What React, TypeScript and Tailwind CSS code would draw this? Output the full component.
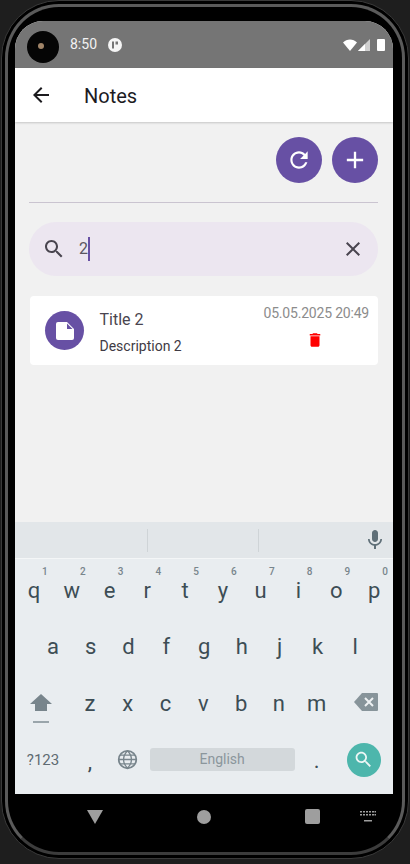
import React from 'react';

const Icon = ({ d, className }: { d: string; className: string }) => (
  <svg viewBox="0 0 24 24" fill="currentColor" className={className}>
    <path d={d} />
  </svg>
);

const row1 = [['q', '1'], ['w', '2'], ['e', '3'], ['r', '4'], ['t', '5'], ['y', '6'], ['u', '7'], ['i', '8'], ['o', '9'], ['p', '0']];
const row2 = ['a', 's', 'd', 'f', 'g', 'h', 'j', 'k', 'l'];
const row3 = ['z', 'x', 'c', 'v', 'b', 'n', 'm'];

function Key({ label, hint }: { label: string; hint?: string }) {
  return (
    <div className="relative w-[37.8px] h-[56.5px] flex items-center justify-center text-[22px] text-[#3d4d55]">
      {label}
      {hint && <span className="absolute top-[2px] right-[5px] text-[10px] font-medium text-[#78858c]">{hint}</span>}
    </div>
  );
}

function Keyboard() {
  return (
    <div className="h-[272px] bg-[#e9edf0] flex flex-col">
      <div className="h-[37px] bg-[#e2e6e9] border-b border-[#f4f6f7] flex items-center">
        <div className="w-[133px] h-[23px] border-r border-[#cfd4d7]" />
        <div className="w-[111px] h-[23px] border-r border-[#cfd4d7]" />
        <Icon
          d="M12 14c1.66 0 3-1.34 3-3V5c0-1.66-1.34-3-3-3S9 3.34 9 5v6c0 1.66 1.34 3 3 3zm5.3-3c0 3-2.54 5.1-5.3 5.1S6.7 14 6.7 11H5c0 3.41 2.72 6.23 6 6.72V21h2v-3.28c3.28-.48 6-3.3 6-6.72h-1.7z"
          className="w-[24px] h-[24px] ml-[104px] text-[#5f6f78]"
        />
      </div>
      <div className="pt-[3px] flex flex-col">
        <div className="flex">
          {row1.map(([l, h]) => <Key key={l} label={l} hint={h} />)}
        </div>
        <div className="flex pl-[19px]">
          {row2.map((l) => <Key key={l} label={l} />)}
        </div>
        <div className="flex">
          <div className="w-[56px] h-[56.5px] flex flex-col items-center justify-center pr-[4px] pt-[11px]">
            <svg viewBox="0 0 22 17" className="w-[22px] h-[17px] text-[#78858c]" fill="currentColor">
              <path d="M11 0 22 10h-5v7H5v-7H0z" />
            </svg>
            <div className="w-[16px] h-[2px] mt-[10px] bg-[#9aa5ab]" />
          </div>
          {row3.map((l) => <Key key={l} label={l} />)}
          <div className="flex-1 h-[56.5px] flex items-center justify-end pr-[15px] pb-[2px]">
            <svg viewBox="0 0 24 18" className="w-[24px] h-[18px]">
              <path d="M8 0h15a1 1 0 0 1 1 1v16a1 1 0 0 1-1 1H8L0 9z" fill="#87949a" />
              <path d="m11 5 8 8m0-8-8 8" stroke="#eef1f3" strokeWidth="2" fill="none" />
            </svg>
          </div>
        </div>
        <div className="flex items-center h-[56.5px]">
          <div className="w-[56px] text-center text-[15px] text-[#5f6b72]">?123</div>
          <div className="w-[37.8px] text-center text-[22px] text-[#3d4d55] pt-[3px]">,</div>
          <div className="w-[37.8px] flex justify-center">
            <svg viewBox="0 0 24 24" fill="none" stroke="#78858c" strokeWidth="2" className="w-[21px] h-[21px]">
              <circle cx="12" cy="12" r="10" />
              <path d="M2 12h20M3.500 7h17M3.500 17h17M12 2c-6 6-6 14 0 20M12 2c6 6 6 14 0 20" strokeWidth="1.500" />
            </svg>
          </div>
          <div className="ml-[3px] w-[145px] h-[23px] rounded-[3px] bg-[#d3d8db] flex items-center justify-center text-[14px] text-[#8b969c]">
            English
          </div>
          <div className="w-[44px] text-center text-[22px] leading-none text-[#3d4d55] pt-[3px]">.</div>
          <div className="ml-[8px] w-[34px] h-[34px] rounded-full bg-[#4db6ac] flex items-center justify-center text-[#eef7f6]">
            <Icon
              d="M15.500 14h-.79l-.28-.27C15.410 12.590 16 11.110 16 9.500 16 5.910 13.090 3 9.500 3S3 5.910 3 9.500 5.910 16 9.500 16c1.610 0 3.090-.59 4.230-1.570l.27.28v.79l5 4.990L20.490 19l-4.990-5zm-6 0C7.010 14 5 11.990 5 9.500S7.010 5 9.500 5 14 7.010 14 9.500 11.990 14 9.500 14z"
              className="w-[21px] h-[21px]"
            />
          </div>
        </div>
      </div>
    </div>
  );
}

export default function App() {
  return (
    <div className="w-[410px] h-[864px] overflow-hidden bg-[#1e1e1e] px-[1px] font-['Roboto',sans-serif]">
      <div className="h-[859px] rounded-[58px] border border-[#3a3a3a] bg-black p-[3px]">
        <div className="h-[851px] rounded-[54px] border-[3px] border-[#5a5a5a] border-b-[#3c3c3c] bg-black pt-[14px] pl-[7px] pr-[9px]">
          <div className="rounded-t-[28px] overflow-hidden bg-[#f1f1f1] flex flex-col">
            {/* status bar */}
            <div className="h-[47px] bg-[#757575] flex items-center pl-[12px] pr-[8px] text-white">
              <div className="w-[32px] h-[32px] rounded-full bg-[#050505] mt-[5px] flex items-center justify-center">
                <div className="w-[6px] h-[6px] mr-[5px] mb-[2px] rounded-full bg-[#a08468]" />
              </div>
              <span className="ml-[11px] text-[14px] text-[#f2f2f2]">8:50</span>
              <svg viewBox="0 0 14 14" className="ml-[11px] w-[14px] h-[14px]">
                <circle cx="7" cy="7" r="7" fill="#f5f5f5" />
                <path d="M4 3.500h2v7H4zM7.500 3.500H10v3H7.500z" fill="#757575" />
              </svg>
              <svg viewBox="0 0 14 12" className="ml-auto w-[14px] h-[12px]" fill="#fff">
                <path d="M0 3.500C3.800-.4 10.200-.4 14 3.500L7 12z" />
              </svg>
              <svg viewBox="0 0 12 12" className="ml-[1px] w-[12px] h-[12px]">
                <path d="M12 0v12H0z" fill="#cfcfcf" />
                <path d="M7 5v7H0z" fill="#fff" />
              </svg>
              <div className="ml-[7px] w-[8px] h-[12px] rounded-[1px] bg-white" />
            </div>

            {/* app bar */}
            <div className="h-[54px] bg-white flex items-center pl-[14px] shadow-[0_1px_2px_rgba(0,0,0,0.18)] z-10">
              <Icon d="M20 11H7.830l5.590-5.590L12 4l-8 8 8 8 1.410-1.410L7.830 13H20v-2z" className="w-[24px] h-[24px] text-[#1c1b1f]" />
              <span className="ml-[31px] pt-[2px] text-[20px] text-[#1c1b1f]">Notes</span>
            </div>

            {/* content */}
            <div className="h-[400px] px-[14px] pt-[15px] flex flex-col">
              <div className="flex justify-end gap-[10px] pr-[1px]">
                <button className="w-[46px] h-[46px] rounded-full bg-[#6750a4] flex items-center justify-center text-white">
                  <Icon
                    d="M17.650 6.350C16.200 4.900 14.210 4 12 4c-4.420 0-7.990 3.580-7.990 8s3.570 8 7.990 8c3.730 0 6.840-2.550 7.730-6h-2.080c-.82 2.330-3.040 4-5.650 4-3.310 0-6-2.690-6-6s2.690-6 6-6c1.660 0 3.140.69 4.220 1.780L13 11h7V4l-2.350 2.350z"
                    className="w-[26px] h-[26px]"
                  />
                </button>
                <button className="w-[46px] h-[46px] rounded-full bg-[#6750a4] flex items-center justify-center text-white">
                  <Icon d="M19 13h-6v6h-2v-6H5v-2h6V5h2v6h6v2z" className="w-[28px] h-[28px]" />
                </button>
              </div>
              <div className="mt-[19px] mr-[1px] h-px bg-[#cac4d0]" />
              <div className="mt-[19px] mr-[1px] h-[54px] rounded-full bg-[#ece6f0] flex items-center pl-[13px] pr-[13px] text-[#49454f]">
                <Icon
                  d="M15.500 14h-.79l-.28-.27C15.410 12.590 16 11.110 16 9.500 16 5.910 13.090 3 9.500 3S3 5.910 3 9.500 5.910 16 9.500 16c1.610 0 3.090-.59 4.230-1.570l.27.28v.79l5 4.990L20.490 19l-4.990-5zm-6 0C7.010 14 5 11.990 5 9.500S7.010 5 9.500 5 14 7.010 14 9.500 11.990 14 9.500 14z"
                  className="w-[24px] h-[24px]"
                />
                <span className="ml-[13px] text-[16px] text-[#5b5660]">2</span>
                <div className="w-[2px] h-[24px] bg-[#6750a4]" />
                <Icon
                  d="M19 6.410L17.590 5 12 10.590 6.410 5 5 6.410 10.590 12 5 17.590 6.410 19 12 13.410 17.590 19 19 17.590 13.410 12z"
                  className="ml-auto w-[24px] h-[24px]"
                />
              </div>
              <div className="mt-[20px] ml-[1px] mr-[1px] h-[69px] rounded-[4px] bg-white flex items-center pl-[15px] pr-[9px]">
                <div className="w-[39px] h-[39px] rounded-full bg-[#6750a4] flex items-center justify-center">
                  <svg viewBox="0 0 18 18" className="w-[18px] h-[18px]">
                    <path d="M2 0h9l7 7v9a2 2 0 0 1-2 2H2a2 2 0 0 1-2-2V2a2 2 0 0 1 2-2z" fill="#fff" />
                    <path d="M11 1.500 16.500 7H11z" fill="#6750a4" />
                  </svg>
                </div>
                <div className="ml-[15.500px] pt-[4px] flex flex-col text-[#49454f]">
                  <span className="text-[16px] leading-[20px]">Title 2</span>
                  <span className="text-[14px] leading-[18px] mt-[7px] text-[#3f3b44]">Description 2</span>
                </div>
                <div className="ml-auto pt-[2px] flex flex-col items-center">
                  <span className="text-[14px] tracking-[-0.2px] leading-[18px] text-[#8c8c8c] mt-[-10px]">05.05.2025 20:49</span>
                  <Icon
                    d="M6 19c0 1.100.9 2 2 2h8c1.100 0 2-.9 2-2V7H6v12zM19 4h-3.500l-1-1h-5l-1 1H5v2h14V4z"
                    className="w-[18px] h-[18px] mt-[9px] mr-[3px] text-[#ff0000]"
                  />
                </div>
              </div>
            </div>

            <Keyboard />
          </div>

          {/* nav bar */}
          <div className="h-[45px] flex items-center pl-[72px]">
            <svg viewBox="0 0 16 14" className="w-[16px] h-[14px] text-[#9e9e9e]" fill="currentColor">
              <path d="M0 0h16L8 14z" />
            </svg>
            <div className="ml-[94px] w-[14px] h-[14px] rounded-full bg-[#9e9e9e]" />
            <div className="ml-[94px] w-[15px] h-[15px] rounded-[2px] bg-[#9e9e9e]" />
            <svg viewBox="0 0 16 12" className="ml-[40px] w-[16px] h-[12px]" fill="#9e9e9e">
              <path d="M0 0h2v1.500H0zM3 0h2v1.500H3zM6 0h2v1.500H6zM9 0h2v1.500H9zM12 0h2v1.500h-2zM14.500 0H16v1.500h-1.500zM0 3h2v1.500H0zM3 3h2v1.500H3zM6 3h2v1.500H6zM9 3h2v1.500H9zM12 3h2v1.500h-2zM14.500 3H16v1.500h-1.500zM4 9h8v1.500H4z" />
            </svg>
          </div>
        </div>
      </div>
    </div>
  );
}
